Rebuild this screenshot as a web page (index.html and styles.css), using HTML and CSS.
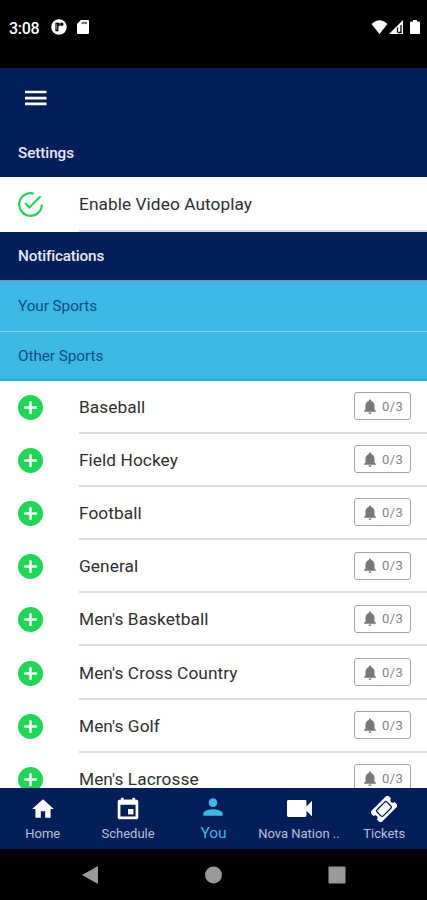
FILE: index.html
```
<!DOCTYPE html>
<html lang="en">
<head>
<meta charset="utf-8">
<title>Settings</title>
<link rel="stylesheet" href="styles.css">
</head>
<body>
<svg width="0" height="0" class="defs">
  <symbol id="plus" viewBox="2 2 20 20"><circle cx="12" cy="12" r="10" fill="#1fd655"/><path d="M12 6.900v10.200M6.900 12h10.200" stroke="#fff" stroke-width="2"/></symbol>
  <symbol id="bell" viewBox="4 2 16 20"><path fill="#777" d="M12 22c1.100 0 2-.9 2-2h-4c0 1.100.89 2 2 2zm6-6v-5c0-3.070-1.640-5.640-4.500-6.320V4c0-.83-.67-1.500-1.500-1.500s-1.500.67-1.500 1.500v.68C7.630 5.360 6 7.920 6 11v5l-2 2v1h16v-1l-2-2z"/></symbol>
</svg>
<div class="status">
  <span class="time">3:08</span>
  <svg class="s-app" viewBox="0 0 16 16"><circle cx="8" cy="8" r="7.800" fill="#fff"/><path d="M4.400 3.800h4.200v3.400H7.400v5h-3z" fill="#000"/><path d="M5.800 5.200v5.500" stroke="#aaa" stroke-width=".9"/><circle cx="10.700" cy="5.300" r="1.700" fill="#000"/></svg>
  <svg class="s-sd" viewBox="0 0 12 14"><path d="M4 0h7a1 1 0 0 1 1 1v12a1 1 0 0 1-1 1H1a1 1 0 0 1-1-1V4z" fill="#fff"/><path d="M4.500 3h5.500" stroke="#777" stroke-width="2.200"/></svg>
  <span class="grow"></span>
  <svg class="s-wifi" viewBox="0 0 16 14"><path d="M0 4Q8-3.600 16 4L8 14z" fill="#fff"/></svg>
  <svg class="s-cell" viewBox="0 0 14 14"><path d="M14 0v14H0z" fill="#fff"/><path d="M8.500 7.500v5M12 5v7.500H9" stroke="#000" fill="none" stroke-width="1.300"/></svg>
  <svg class="s-batt" viewBox="0 0 10 14"><path d="M3 0h4v1.400h2a1 1 0 0 1 1 1V13a1 1 0 0 1-1 1H1a1 1 0 0 1-1-1V2.400a1 1 0 0 1 1-1h2z" fill="#fff"/></svg>
</div>
<header class="bar">
  <svg class="menu" viewBox="0 0 22 16"><path d="M0 2h21.500M0 8.200h21.500M0 13.900h21.500" stroke="#fff" stroke-width="2.700"/></svg>
</header>
<main class="content">
  <h2 class="section">Settings</h2>
  <div class="row autoplay">
    <svg class="icon" viewBox="0 0 25 25" fill="none" stroke="#22d358" stroke-width="2.200"><path d="M23.800 12.500A11.300 11.300 0 1 1 15.800 1.700"/><path d="M7.200 11l4.200 4.500L22.600 4.300"/></svg>
    <div class="body"><span class="label">Enable Video Autoplay</span></div>
  </div>
  <h2 class="section notes">Notifications</h2>
  <h3 class="sub">Your Sports</h3>
  <h3 class="sub other">Other Sports</h3>
  <div class="row"><svg class="icon"><use href="#plus"/></svg><div class="body"><span class="label">Baseball</span><span class="badge"><svg><use href="#bell"/></svg>0/3</span></div></div>
  <div class="row"><svg class="icon"><use href="#plus"/></svg><div class="body"><span class="label">Field Hockey</span><span class="badge"><svg><use href="#bell"/></svg>0/3</span></div></div>
  <div class="row"><svg class="icon"><use href="#plus"/></svg><div class="body"><span class="label">Football</span><span class="badge"><svg><use href="#bell"/></svg>0/3</span></div></div>
  <div class="row"><svg class="icon"><use href="#plus"/></svg><div class="body"><span class="label">General</span><span class="badge"><svg><use href="#bell"/></svg>0/3</span></div></div>
  <div class="row"><svg class="icon"><use href="#plus"/></svg><div class="body"><span class="label">Men's Basketball</span><span class="badge"><svg><use href="#bell"/></svg>0/3</span></div></div>
  <div class="row"><svg class="icon"><use href="#plus"/></svg><div class="body"><span class="label">Men's Cross Country</span><span class="badge"><svg><use href="#bell"/></svg>0/3</span></div></div>
  <div class="row"><svg class="icon"><use href="#plus"/></svg><div class="body"><span class="label">Men's Golf</span><span class="badge"><svg><use href="#bell"/></svg>0/3</span></div></div>
  <div class="row"><svg class="icon"><use href="#plus"/></svg><div class="body"><span class="label">Men's Lacrosse</span><span class="badge"><svg><use href="#bell"/></svg>0/3</span></div></div>
</main>
<nav class="tabs">
  <a class="tab"><svg viewBox="0 0 24 24"><path d="M10 20v-6h4v6h5v-8h3L12 3 2 12h3v8z"/></svg><span>Home</span></a>
  <a class="tab"><svg viewBox="0 0 24 24"><path d="M17 12h-5v5h5v-5z"/><path fill-rule="evenodd" d="M16 1.500v1.700H8V1.500H5.500v1.700H5C3.500 3.200 2.500 4 2.500 5.200V19.500c0 1.200 1 2 2.200 2h14.600c1.200 0 2.200-.8 2.200-2V5.200c0-1.200-1-2-2.500-2h-.5V1.500zM5 8h14v11H5z"/></svg><span>Schedule</span></a>
  <a class="tab active"><svg viewBox="0 0 24 24"><path d="M12 12c2.210 0 4-1.790 4-4s-1.790-4-4-4-4 1.790-4 4 1.790 4 4 4zm0 2c-2.900 0-9 1.340-9 4v2h18v-2c0-2.660-6.100-4-9-4z"/></svg><span>You</span></a>
  <a class="tab"><svg class="video" viewBox="3 6 18 12" preserveAspectRatio="none"><path d="M17 10.500V7c0-.55-.45-1-1-1H4c-.55 0-1 .45-1 1v10c0 .55.45 1 1 1h12c.55 0 1-.45 1-1v-3.500l4 4v-11l-4 4z"/></svg><span>Nova Nation ..</span></a>
  <a class="tab"><svg viewBox="0 0 24 24"><g transform="rotate(-45 12 12)"><path d="M1.500 5h21a1 1 0 0 1 1 1v3.800a2.200 2.200 0 0 0 0 4.400V18a1 1 0 0 1-1 1h-21a1 1 0 0 1-1-1v-3.800a2.200 2.200 0 0 0 0-4.400V6a1 1 0 0 1 1-1z"/><rect x="5.500" y="8" width="13" height="8" rx="1.500" fill="none" stroke="#001e5a" stroke-width="1.200"/></g></svg><span>Tickets</span></a>
</nav>
<div class="sysnav">
  <svg viewBox="0 0 18 20"><path d="M17 1v18L1 10z" fill="#999"/></svg>
  <svg viewBox="0 0 18 20"><circle cx="9.500" cy="10" r="8.500" fill="#999"/></svg>
  <svg viewBox="0 0 18 20"><rect x=".5" y="1.500" width="17" height="17" rx="1" fill="#999"/></svg>
</div>
</body>
</html>
```
FILE: styles.css
```
* { box-sizing: border-box; }
body { margin: 0; height: 900px; display: flex; flex-direction: column; overflow: hidden; background: #000; font-family: Roboto, "Liberation Sans", sans-serif; }
svg { display: block; flex: none; }
.defs { position: absolute; }
.status { height: 67.500px; flex: none; display: flex; align-items: flex-start; padding: 20px 7px 0 9px; color: #fff; }
.time { font-size: 16px; font-weight: 500; line-height: 17px; width: 42px; letter-spacing: -.3px; }
.s-app { width: 16px; height: 16px; margin-top: -1px; }
.s-sd { width: 12px; height: 14px; margin-left: 10px; }
.grow { flex: 1; }
.s-wifi { width: 17px; height: 14px; }
.s-cell { width: 14px; height: 14px; margin-left: 1px; }
.s-batt { width: 10px; height: 14px; margin: 0 0 0 7px; }
.bar { height: 61.500px; flex: none; background: #001e5a; padding: 22.500px 0 0 24.500px; }
.menu { width: 22px; height: 16px; }
.content { height: 659px; flex: none; overflow: hidden; background: #fff; }
.section { margin: 0; height: 48px; background: #001e5a; color: #e6e8f2; font-size: 15.300px; font-weight: 500; line-height: 49px; padding-left: 18px; letter-spacing: -.08px; }
.notes { height: 49px; border-bottom: 1px solid #7f8aad; letter-spacing: -.15px; }
.sub { margin: 0; height: 50.500px; background: #3db7e4; border-bottom: 1.500px solid #8fd3ec; color: #0b4c87; font-size: 15.300px; font-weight: 400; line-height: 51px; padding-left: 18px; letter-spacing: -.05px; }
.other { height: 49px; border-bottom: 2px solid #1fafdc; line-height: 49px; }
.row { height: 53.200px; display: flex; align-items: center; padding-left: 18px; }
.icon { width: 25px; height: 25px; }
.body { flex: 1; height: 100%; margin-left: 36px; display: flex; align-items: center; justify-content: space-between; padding-right: 16px; border-bottom: 2px solid #dcdcdc; }
.label { font-size: 17.300px; font-weight: 400; color: #303030; letter-spacing: .06px; padding-top: 1px; }
.autoplay { height: 55px; }
.badge { width: 57px; height: 28px; border: 1.500px solid #a4a4a4; border-radius: 3px; display: flex; align-items: center; gap: 5px; padding-left: 8px; font-size: 13px; color: #858585; letter-spacing: .4px; }
.badge svg { width: 14px; height: 15px; }
.tabs { height: 61px; flex: none; display: grid; grid-template-columns: repeat(5, 1fr); background: #001e5a; }
.tab { display: flex; flex-direction: column; align-items: center; padding-top: 8px; color: #b9c1d6; font-size: 13px; line-height: 16px; white-space: nowrap; }
.tab svg { width: 26px; height: 26px; fill: #fff; margin-bottom: 4px; }
.tab .video { width: 25px; height: 17px; margin: 4px 0 9px 2px; }
.active { color: #3db7e4; font-size: 15.500px; padding-top: 6px; }
.active svg { fill: #3db7e4; margin-bottom: 5px; }
.sysnav { flex: 1; display: flex; justify-content: space-between; align-items: center; padding: 0 81.500px 0 81px; }
.sysnav svg { width: 18px; height: 20px; }
```
